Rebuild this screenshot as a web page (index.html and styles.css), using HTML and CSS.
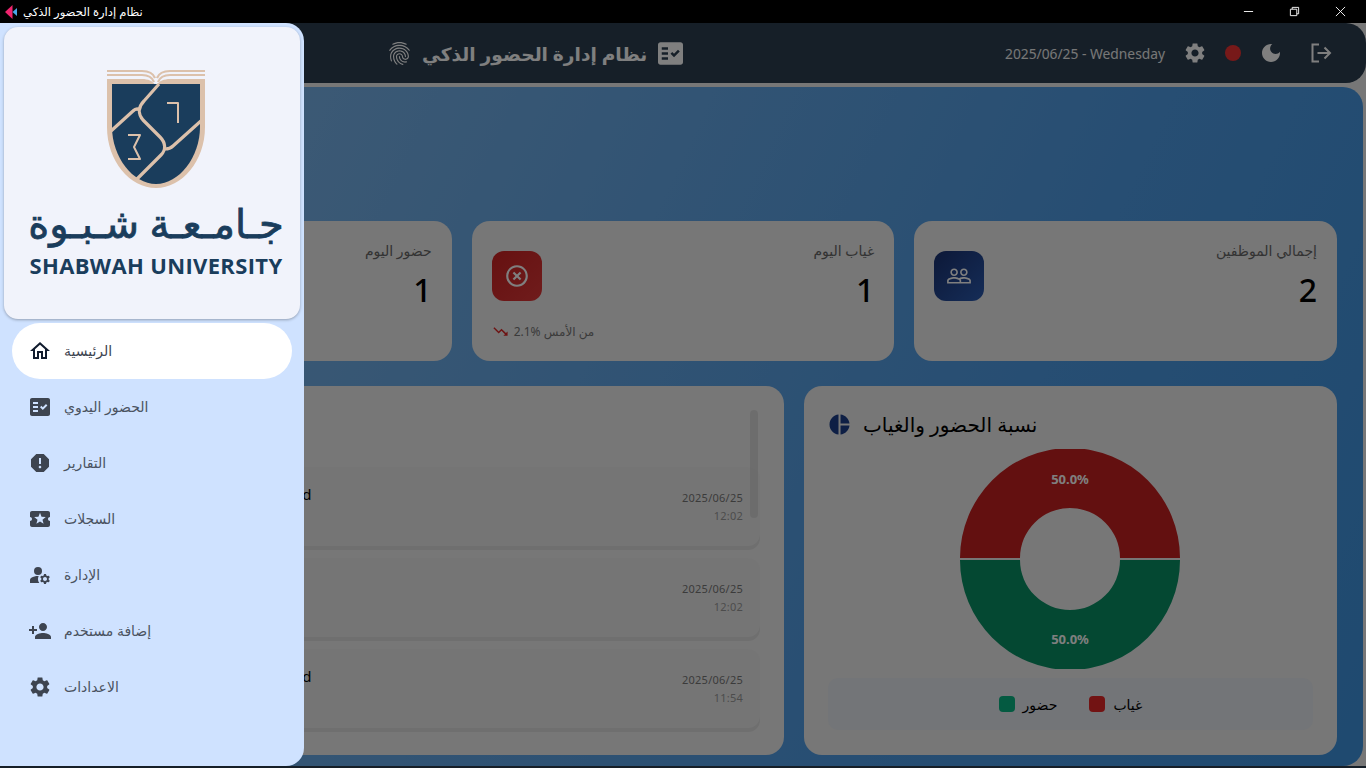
FILE: index.html
```html
<!DOCTYPE html>
<html lang="ar">
<head>
  <meta charset="UTF-8">
  <meta name="viewport" content="width=device-width, initial-scale=1.0">
  <title>نظام إدارة الحضور الذكي</title>
  <link rel="stylesheet" href="styles.css">
</head>
<body>

  <div class="titlebar">
    <div class="titlebar-name">
      <svg class="app-icon" viewBox="0 0 12 14"><path fill="#f0246e" d="M7.500 0v14L0 7z"/><path fill="#4aa8e8" d="M12 3v8L7.500 7z"/></svg>
      <span dir="rtl">نظام إدارة الحضور الذكي</span>
    </div>
    <div class="window-btns">
      <span class="window-btn"><svg viewBox="0 0 12 12"><path d="M1 6h10" stroke="#fff" fill="none"/></svg></span>
      <span class="window-btn"><svg viewBox="0 0 12 12"><path d="M1.500 3.500h7v7h-7zM3.500 3.500v-2h7v7h-2" stroke="#fff" fill="none"/></svg></span>
      <span class="window-btn"><svg viewBox="0 0 12 12"><path d="M1 1l10 10M11 1L1 11" stroke="#fff" fill="none"/></svg></span>
    </div>
  </div>

  <div class="app">
    <header class="topbar">
      <div class="brand">
        <svg class="brand-print" viewBox="2 1.500 20 21"><path d="M17.81 4.47c-.08 0-.16-.02-.23-.06C15.66 3.42 14 3 12.01 3c-1.98 0-3.86.47-5.57 1.41-.24.13-.54.04-.68-.2-.13-.24-.04-.55.2-.68C7.82 2.52 9.86 2 12.01 2c2.13 0 3.99.47 6.03 1.52.25.13.34.43.21.67-.09.18-.26.28-.44.28zM3.5 9.72c-.1 0-.2-.03-.29-.09-.23-.16-.28-.47-.12-.7.99-1.4 2.25-2.5 3.75-3.27C9.98 4.04 14 4.03 17.15 5.65c1.5.77 2.76 1.86 3.75 3.25.16.22.11.54-.12.7-.23.16-.54.11-.7-.12-.9-1.26-2.04-2.25-3.39-2.94-2.87-1.47-6.54-1.47-9.4.01-1.36.7-2.5 1.7-3.4 2.96-.08.14-.23.21-.39.21zm6.25 12.07c-.13 0-.26-.05-.35-.15-.87-.87-1.34-1.43-2.01-2.64-.69-1.23-1.05-2.73-1.05-4.34 0-2.97 2.54-5.39 5.66-5.39s5.66 2.42 5.66 5.39c0 .28-.22.5-.5.5s-.5-.22-.5-.5c0-2.42-2.09-4.39-4.66-4.39s-4.66 1.97-4.66 4.39c0 1.44.32 2.77.93 3.85.64 1.15 1.08 1.64 1.85 2.42.19.2.19.51 0 .71-.11.1-.24.15-.37.15zm7.17-1.85c-1.19 0-2.24-.3-3.1-.89-1.49-1.01-2.38-2.65-2.38-4.39 0-.28.22-.5.5-.5s.5.22.5.5c0 1.41.72 2.74 1.94 3.56.71.48 1.54.71 2.54.71.24 0 .64-.03 1.04-.1.27-.05.53.13.58.41.05.27-.13.53-.41.58-.57.11-1.07.12-1.21.12zM14.91 22c-.04 0-.09-.01-.13-.02-1.59-.44-2.63-1.03-3.72-2.1-1.4-1.39-2.17-3.24-2.17-5.22 0-1.62 1.38-2.94 3.08-2.94s3.08 1.32 3.08 2.94c0 1.07.93 1.94 2.08 1.94s2.08-.87 2.08-1.94c0-3.77-3.25-6.83-7.25-6.83-2.84 0-5.44 1.58-6.61 4.03-.39.81-.59 1.76-.59 2.8 0 .78.07 2.01.67 3.61.1.26-.03.55-.29.64-.26.1-.55-.04-.64-.29-.49-1.31-.73-2.61-.73-3.96 0-1.2.23-2.29.68-3.24 1.33-2.79 4.28-4.6 7.51-4.6 4.55 0 8.25 3.51 8.25 7.83 0 1.62-1.38 2.94-3.08 2.94s-3.08-1.32-3.08-2.94c0-1.07-.93-1.94-2.08-1.94s-2.08.87-2.08 1.94c0 1.71.66 3.31 1.87 4.51.95.94 1.86 1.46 3.27 1.85.27.07.42.35.35.61-.05.23-.26.38-.47.38z"/></svg>
        <h1 class="brand-title" dir="rtl">نظام إدارة الحضور الذكي</h1>
        <svg class="brand-check" viewBox="2 3 20 18"><path d="M20,3H4C2.9,3,2,3.9,2,5v14c0,1.1,0.9,2,2,2h16c1.1,0,2-0.9,2-2V5C22,3.9,21.1,3,20,3z M10,17H5v-2h5V17z M10,13H5v-2h5V13z M10,9H5V7h5V9z M14.82,15L12,12.16l1.41-1.41l1.41,1.42L17.99,9l1.42,1.42L14.82,15z"/></svg>
      </div>
      <div class="topbar-tools">
        <span class="topbar-date">2025/06/25 - Wednesday</span>
        <svg class="tool-icon" viewBox="0 0 24 24"><path d="M19.14,12.94c0.04-0.3,0.06-0.61,0.06-0.94c0-0.32-0.02-0.64-0.07-0.94l2.03-1.58c0.18-0.14,0.23-0.41,0.12-0.61l-1.92-3.32c-0.12-0.22-0.37-0.29-0.59-0.22l-2.39,0.96c-0.5-0.38-1.03-0.7-1.62-0.94L14.4,2.81c-0.04-0.24-0.24-0.41-0.48-0.41h-3.84c-0.24,0-0.43,0.17-0.47,0.41L9.25,5.35C8.66,5.59,8.12,5.92,7.63,6.29L5.24,5.33c-0.22-0.08-0.47,0-0.59,0.22L2.74,8.87C2.62,9.08,2.66,9.34,2.86,9.48l2.03,1.58C4.84,11.36,4.8,11.69,4.8,12s0.02,0.64,0.07,0.94l-2.03,1.58c-0.18,0.14-0.23,0.41-0.12,0.61l1.92,3.32c0.12,0.22,0.37,0.29,0.59,0.22l2.39-0.96c0.5,0.38,1.03,0.7,1.62,0.94l0.36,2.54c0.05,0.24,0.24,0.41,0.48,0.41h3.84c0.24,0,0.44-0.17,0.47-0.41l0.36-2.54c0.59-0.24,1.13-0.56,1.62-0.94l2.39,0.96c0.22,0.08,0.47,0,0.59-0.22l1.92-3.32c0.12-0.22,0.07-0.47-0.12-0.61L19.14,12.94z M12,15.6c-1.98,0-3.6-1.62-3.6-3.6s1.62-3.6,3.6-3.6s3.6,1.62,3.6,3.6S13.98,15.6,12,15.6z"/></svg>
        <span class="status-dot"></span>
        <svg class="tool-icon" viewBox="0 0 24 24"><path d="M12 3c-4.97 0-9 4.03-9 9s4.03 9 9 9 9-4.03 9-9c0-.46-.04-.92-.1-1.36-.98 1.37-2.58 2.26-4.4 2.26-2.98 0-5.4-2.42-5.4-5.4 0-1.81.89-3.42 2.26-4.4-.44-.06-.9-.1-1.36-.1z"/></svg>
        <svg class="tool-icon logout-icon" viewBox="0 0 24 24"><path d="M10 3.500H3.500v17H10M8.500 12H21M15.500 6.500L21 12l-5.500 5.500" fill="none" stroke="#fff" stroke-width="2"/></svg>
      </div>
    </header>

    <main class="main">
      <section class="stats">
        <div class="stat-card">
          <div class="stat-top">
            <span class="stat-icon icon-green"></span>
            <div class="stat-text">
              <div class="stat-label" dir="rtl">حضور اليوم</div>
              <div class="stat-value">1</div>
            </div>
          </div>
        </div>
        <div class="stat-card">
          <div class="stat-top">
            <span class="stat-icon icon-red">
              <svg viewBox="0 0 24 24"><path d="M14.59 8L12 10.59 9.41 8 8 9.41 10.59 12 8 14.59 9.41 16 12 13.41 14.59 16 16 14.59 13.41 12 16 9.41 14.59 8zM12 2C6.47 2 2 6.47 2 12s4.47 10 10 10 10-4.47 10-10S17.53 2 12 2zm0 18c-4.41 0-8-3.59-8-8s3.59-8 8-8 8 3.59 8 8-3.59 8-8 8z"/></svg>
            </span>
            <div class="stat-text">
              <div class="stat-label" dir="rtl">غياب اليوم</div>
              <div class="stat-value">1</div>
            </div>
          </div>
          <div class="stat-trend">
            <svg viewBox="0 0 24 24"><path d="M16 18l2.290-2.290-4.880-4.880-4 4L2 7.410 3.410 6l6 6 4-4 6.300 6.290L22 12v6z"/></svg>
            <span>2.1% من الأمس</span>
          </div>
        </div>
        <div class="stat-card">
          <div class="stat-top">
            <span class="stat-icon icon-blue">
              <svg viewBox="0 0 24 24"><path d="M16.5 13c-1.2 0-3.07.34-4.5 1-1.43-.67-3.3-1-4.5-1C5.33 13 1 14.08 1 16.25V19h22v-2.75c0-2.17-4.33-3.25-6.5-3.25zm-4 4.5h-10v-1.25c0-.54 2.56-1.75 5-1.75s5 1.21 5 1.75v1.25zm9 0H14v-1.25c0-.46-.2-.86-.52-1.22.88-.3 1.96-.53 3.02-.53 2.44 0 5 1.21 5 1.75v1.25zM7.5 12c1.93 0 3.5-1.57 3.5-3.5S9.43 5 7.5 5 4 6.57 4 8.5 5.57 12 7.5 12zm0-5.500c1.100 0 2 .9 2 2s-.9 2-2 2-2-.9-2-2 .9-2 2-2zm9 5.500c1.930 0 3.500-1.570 3.500-3.500S18.430 5 16.500 5 13 6.570 13 8.500s1.570 3.500 3.500 3.500zm0-5.500c1.100 0 2 .9 2 2s-.9 2-2 2-2-.9-2-2 .9-2 2-2z"/></svg>
            </span>
            <div class="stat-text">
              <div class="stat-label" dir="rtl">إجمالي الموظفين</div>
              <div class="stat-value">2</div>
            </div>
          </div>
        </div>
      </section>

      <section class="panels">
        <div class="panel records">
          <div class="record">
            <div class="record-name">Mohammed Ahmed</div>
            <div class="record-when"><div class="record-date">2025/06/25</div><div class="record-time">12:02</div></div>
          </div>
          <div class="record">
            <div class="record-name">Ali</div>
            <div class="record-when"><div class="record-date">2025/06/25</div><div class="record-time">12:02</div></div>
          </div>
          <div class="record">
            <div class="record-name">Mohammed Ahmed</div>
            <div class="record-when"><div class="record-date">2025/06/25</div><div class="record-time">11:54</div></div>
          </div>
          <span class="scroll-thumb"></span>
        </div>

        <div class="panel chart">
          <div class="chart-title">
            <svg viewBox="1.500 1.500 21 21"><path d="M11 2v20c-5.070-.5-9-4.790-9-10s3.930-9.500 9-10zm2.030 0v8.990H22c-.47-4.740-4.240-8.520-8.970-8.990zm0 11.010V22c4.740-.47 8.500-4.250 8.970-8.990h-8.970z"/></svg>
            <h2 dir="rtl">نسبة الحضور والغياب</h2>
          </div>
          <svg class="donut" viewBox="0 0 220 220">
            <path fill="#c62020" d="M0 109A110 110 0 0 1 220 109H160A50 50 0 0 0 60 109z"/>
            <path fill="#089064" d="M0 111A110 110 0 0 0 220 111H160A50 50 0 0 1 60 111z"/>
            <text x="110" y="35" class="donut-label">50.0%</text>
            <text x="110" y="195" class="donut-label">50.0%</text>
          </svg>
          <div class="legend">
            <span class="legend-item"><i class="swatch swatch-green"></i><span dir="rtl">حضور</span></span>
            <span class="legend-item"><i class="swatch swatch-red"></i><span dir="rtl">غياب</span></span>
          </div>
        </div>
      </section>
    </main>
    <div class="bottom-strip"></div>

    <!-- dimmed page behind the open drawer -->
    <div class="backdrop"></div>

    <aside class="drawer">
      <div class="logo-card">
        <svg class="crest" viewBox="0 0 100 120">
          <g fill="none" stroke="#dcc1ab" stroke-width="2.200">
            <path d="M1 2H36C42 2 47 4 49 9M99 2H64C58 2 53 4 51 9"/>
            <path d="M1 6H36C42 6 46 8 48 13M99 6H64C58 6 54 8 52 13"/>
          </g>
          <path fill="#dcc1ab" d="M1 10H36C42 10 47 12 49 16H51C53 12 58 10 64 10H99V58C99 92 76 119 50 119C24 119 1 92 1 58Z"/>
          <path fill="#1a3d5c" d="M6 15H94V58C94 88 73 115 50 115C27 115 6 88 6 58Z"/>
          <g fill="none" stroke="#dcc1ab" stroke-width="3.200" stroke-linejoin="round">
            <path d="M53 15L38 32C32 38 32 45 37 51L54 68C60 74 60 81 55 86L31 110"/>
            <path d="M5 62L27 42C29 40 31 39 34 41"/>
            <path d="M59 80C62 80 65 79 67 77L96 51"/>
            <path d="M61 34H72V54" stroke-width="2"/>
            <path d="M22 66H34L28 78L34 90H22" stroke-width="2"/>
          </g>
        </svg>
        <div class="logo-ar" dir="rtl">جـامـعـة شـبـوة</div>
        <div class="logo-en">SHABWAH UNIVERSITY</div>
      </div>
      <nav class="nav">
        <a class="nav-item active"><svg viewBox="0 0 24 24"><path d="M12 3L2 12h3v8h6v-6h2v6h6v-8h3L12 3zm5 15h-2v-6H9v6H7v-7.810l5-4.500 5 4.500V18z"/></svg><span dir="rtl">الرئيسية</span></a>
        <a class="nav-item"><svg viewBox="0 0 24 24"><path d="M20,3H4C2.900,3,2,3.900,2,5v14c0,1.100,0.900,2,2,2h16c1.100,0,2-0.900,2-2V5C22,3.900,21.100,3,20,3z M10,17H5v-2h5V17z M10,13H5v-2h5V13z M10,9H5V7h5V9z M14.820,15L12,12.160l1.410-1.410l1.410,1.420L17.990,9l1.420,1.420L14.820,15z"/></svg><span dir="rtl">الحضور اليدوي</span></a>
        <a class="nav-item"><svg viewBox="0 0 24 24"><path d="M15.730 3H8.270L3 8.270v7.460L8.270 21h7.460L21 15.730V8.270L15.730 3zM12 17.300c-.72 0-1.300-.58-1.300-1.300 0-.72.58-1.300 1.300-1.300.72 0 1.300.58 1.300 1.300 0 .72-.58 1.300-1.300 1.300zm1-4.300h-2V7h2v6z"/></svg><span dir="rtl">التقارير</span></a>
        <a class="nav-item"><svg viewBox="0 0 24 24"><path d="M20 12c0-1.100.9-2 2-2V6c0-1.100-.9-2-2-2H4c-1.100 0-1.990.9-1.990 2v4c1.100 0 1.990.9 1.990 2s-.89 2-2 2v4c0 1.100.9 2 2 2h16c1.100 0 2-.9 2-2v-4c-1.100 0-2-.9-2-2zm-4.420 4.800L12 14.500l-3.580 2.300 1.080-4.120-3.290-2.690 4.240-.25L12 5.800l1.540 3.950 4.240.25-3.290 2.690 1.090 4.110z"/></svg><span dir="rtl">السجلات</span></a>
        <a class="nav-item"><svg viewBox="0 0 24 24"><circle cx="10" cy="8" r="4"/><path d="M10.670,13.020C10.450,13.010,10.230,13,10,13c-2.420,0-4.680,0.670-6.610,1.820C2.510,15.340,2,16.320,2,17.350V20h9.260C10.470,18.870,10,17.490,10,16C10,14.930,10.250,13.930,10.670,13.020z"/><path d="M20.750,16c0-0.220-0.030-0.420-0.060-0.630l1.140-1.010l-1-1.730l-1.450,0.490c-0.320-0.270-0.680-0.480-1.080-0.630L18,11h-2l-0.300,1.490c-0.400,0.150-0.760,0.360-1.080,0.630l-1.450-0.490l-1,1.730l1.140,1.010c-0.030,0.210-0.060,0.410-0.060,0.630s0.030,0.420,0.060,0.630l-1.140,1.010l1,1.730l1.450-0.490c0.320,0.270,0.680,0.480,1.080,0.630L16,21h2l0.300-1.490c0.400-0.150,0.760-0.360,1.080-0.630l1.450,0.490l1-1.730l-1.140-1.010C20.720,16.420,20.750,16.220,20.750,16z M17,18c-1.100,0-2-0.900-2-2s0.900-2,2-2s2,0.900,2,2S18.100,18,17,18z"/></svg><span dir="rtl">الإدارة</span></a>
        <a class="nav-item"><svg viewBox="0 0 24 24"><path d="M15 12c2.210 0 4-1.790 4-4s-1.790-4-4-4-4 1.790-4 4 1.790 4 4 4zm-9-2V7H4v3H1v2h3v3h2v-3h3v-2H6zm9 4c-2.670 0-8 1.340-8 4v2h16v-2c0-2.660-5.330-4-8-4z"/></svg><span dir="rtl">إضافة مستخدم</span></a>
        <a class="nav-item"><svg viewBox="0 0 24 24"><path d="M19.140,12.940c0.040-0.300,0.060-0.610,0.060-0.940c0-0.320-0.020-0.640-0.070-0.940l2.030-1.580c0.180-0.140,0.230-0.410,0.120-0.610l-1.920-3.320c-0.120-0.220-0.370-0.290-0.590-0.220l-2.390,0.960c-0.500-0.380-1.030-0.700-1.620-0.940L14.400,2.810c-0.040-0.240-0.240-0.410-0.480-0.410h-3.840c-0.240,0-0.430,0.170-0.470,0.410L9.250,5.350C8.660,5.590,8.120,5.920,7.630,6.290L5.240,5.330c-0.220-0.080-0.470,0-0.590,0.220L2.740,8.870C2.620,9.080,2.660,9.340,2.860,9.480l2.030,1.580C4.840,11.360,4.800,11.690,4.800,12s0.020,0.640,0.070,0.940l-2.030,1.580c-0.180,0.140-0.230,0.410-0.120,0.610l1.920,3.320c0.120,0.220,0.370,0.290,0.590,0.220l2.390-0.960c0.500,0.380,1.030,0.700,1.620,0.940l0.360,2.540c0.050,0.240,0.240,0.410,0.480,0.410h3.840c0.240,0,0.440-0.170,0.470-0.410l0.360-2.540c0.590-0.240,1.130-0.560,1.620-0.940l2.390,0.960c0.220,0.080,0.470,0,0.590-0.220l1.920-3.320c0.120-0.220,0.070-0.470-0.120-0.610L19.140,12.940z M12,15.600c-1.980,0-3.600-1.620-3.600-3.600s1.620-3.600,3.600-3.600s3.600,1.620,3.600,3.600S13.980,15.600,12,15.600z"/></svg><span dir="rtl">الاعدادات</span></a>
      </nav>
    </aside>
  </div>

</body>
</html>
```
FILE: styles.css
```css
* {
  box-sizing: border-box;
}
html, body {
  height: 100%;
}
body {
  margin: 0;
  overflow: hidden;
  display: flex;
  flex-direction: column;
  font-family: 'Noto Sans', 'DejaVu Sans', sans-serif;
  background: #000;
}

/* window title bar */
.titlebar {
  height: 23px;
  flex: none;
  background: #000;
  color: #fff;
  display: flex;
  justify-content: space-between;
  align-items: center;
}
.titlebar-name {
  display: flex;
  align-items: center;
  gap: 6px;
  padding-left: 5px;
  font-size: 11.6px;
}
.app-icon {
  width: 12px;
  height: 14px;
}
.window-btns {
  display: flex;
  padding-right: 3px;
}
.window-btn {
  width: 46px;
  height: 23px;
  display: flex;
  align-items: center;
  justify-content: center;
}
.window-btn svg {
  width: 11px;
  height: 11px;
}

/* app */
.app {
  position: relative;
  flex: 1;
  display: flex;
  flex-direction: column;
  background: #eee;
  min-height: 0;
}
.topbar {
  height: 60px;
  flex: none;
  background: #2c3e50;
  border-radius: 0 20px 20px 0;
  display: flex;
  justify-content: space-between;
  align-items: center;
  padding: 0 33px 0 388px;
  color: #fff;
}
.brand {
  display: flex;
  align-items: center;
  gap: 11px;
}
.brand-print {
  width: 23px;
  height: 25px;
  fill: #fff;
}
.brand-title {
  margin: 0;
  font-size: 18.600px;
  font-weight: 700;
}
.brand-check {
  width: 25px;
  height: 23px;
  fill: #fff;
}
.topbar-tools {
  display: flex;
  align-items: center;
}
.topbar-date {
  font-size: 13.800px;
  color: #eee;
  margin-right: 18px;
}
.tool-icon {
  width: 24px;
  height: 24px;
  fill: #fff;
}
.status-dot {
  width: 16px;
  height: 16px;
  border-radius: 50%;
  background: #ee3333;
  margin: 0 18px;
}
.logout-icon {
  margin-left: 26px;
}

.main {
  flex: 1;
  min-height: 0;
  margin: 4px 3px 0 0;
  padding: 134px 26px 11px 29px;
  border-radius: 0 20px 20px 0;
  background: linear-gradient(115deg, #7ab4ea 15%, #4e9ce6 70%, #3e94e0);
  display: flex;
  flex-direction: column;
  gap: 25px;
}
.bottom-strip {
  height: 2px;
  flex: none;
  background: #2c3e50;
}
.stats {
  display: grid;
  grid-template-columns: repeat(3, 1fr);
  gap: 20px;
}
.stat-card {
  height: 140px;
  background: #eee;
  border-radius: 18px;
  padding: 20px;
  display: flex;
  flex-direction: column;
  justify-content: space-between;
}
.stat-top {
  display: flex;
  justify-content: space-between;
}
.stat-icon {
  width: 50px;
  height: 50px;
  margin-top: 10px;
  border-radius: 12px;
  display: flex;
  align-items: center;
  justify-content: center;
}
.stat-icon svg {
  width: 26px;
  height: 26px;
  fill: #fff;
}
.icon-green {
  background: #0d9668;
}
.icon-red {
  background: linear-gradient(135deg, #cc2222, #e03838);
}
.icon-blue {
  background: linear-gradient(135deg, #1a3170, #2a5ab0);
}
.stat-text {
  text-align: right;
}
.stat-label {
  font-size: 14px;
  color: #666;
  line-height: 20px;
}
.stat-value {
  font-size: 32px;
  font-weight: 500;
  line-height: 40px;
  margin-top: 9px;
  color: #000;
}
.stat-trend {
  display: flex;
  align-items: center;
  gap: 5px;
  font-size: 12px;
  color: #777;
  padding-bottom: 1px;
}
.stat-trend svg {
  width: 17px;
  height: 17px;
  fill: #dc2626;
}

.panels {
  flex: 1;
  min-height: 0;
  display: grid;
  grid-template-columns: 1fr 533px;
  gap: 20px;
}
.panel {
  position: relative;
  background: #eee;
  border-radius: 18px;
}
.records {
  padding: 81px 24px 0;
  display: flex;
  flex-direction: column;
  gap: 12px;
}
.record {
  height: 79px;
  flex: none;
  background: #ebebeb;
  border-radius: 12px;
  box-shadow: 0 4px 0 #dedede;
  padding: 0 17px 0 0;
  display: flex;
  justify-content: space-between;
  align-items: center;
}
.record-name {
  font-size: 15px;
  color: #000;
  padding-left: 118px;
  margin-top: -26px;
}
.record-when {
  text-align: right;
  margin-top: 1px;
}
.record-date {
  font-size: 11px;
  line-height: 18px;
  letter-spacing: .25px;
  color: #777;
}
.record-time {
  font-size: 11px;
  line-height: 18px;
  letter-spacing: .25px;
  color: #999;
}
.scroll-thumb {
  position: absolute;
  top: 24px;
  right: 26px;
  width: 8px;
  height: 108px;
  border-radius: 4px;
  background: rgba(0, 0, 0, .08);
}
.chart {
  padding: 23px 25px 24px 24px;
  display: flex;
  flex-direction: column;
}
.chart-title {
  display: flex;
  align-items: center;
  gap: 13px;
  height: 30px;
  margin-left: 1px;
}
.chart-title svg {
  width: 21px;
  height: 21px;
  fill: #1c3f8a;
}
.chart-title h2 {
  margin: 0;
  font-size: 20px;
  font-weight: 400;
  color: #000;
}
.donut {
  width: 220px;
  height: 220px;
  margin: 10px auto 0;
}
.donut-label {
  font-size: 13px;
  font-weight: 700;
  fill: #fff;
  text-anchor: middle;
}
.legend {
  margin: 9px -1px 0 0;
  height: 52px;
  background: #e6eaf0;
  border-radius: 10px;
  display: flex;
  justify-content: center;
  align-items: center;
  gap: 32px;
  font-size: 14px;
  color: #000;
}
.legend-item {
  display: flex;
  align-items: center;
  gap: 8px;
}
.swatch {
  width: 16px;
  height: 16px;
  border-radius: 4px;
}
.swatch-green {
  background: #08b482;
}
.swatch-red {
  background: #e42626;
}

.backdrop {
  position: absolute;
  inset: 0;
  background: rgba(0, 0, 0, .5);
}
.drawer {
  position: absolute;
  left: 0;
  top: 0;
  bottom: 2px;
  width: 304px;
  background: #cfe2ff;
  border-radius: 0 18px 18px 0;
  padding: 4px 4px 0;
  display: flex;
  flex-direction: column;
}
.logo-card {
  height: 292px;
  flex: none;
  background: #f1f3fb;
  border-radius: 14px;
  box-shadow: 0 1px 3px rgba(0, 0, 0, .3);
  display: flex;
  flex-direction: column;
  align-items: center;
  padding: 42px 0 0 8px;
}
.crest {
  width: 100px;
  height: 120px;
}
.logo-ar {
  font-size: 40px;
  line-height: 46px;
  margin-top: 11px;
  color: #1a3d5c;
  -webkit-text-stroke: .8px #1a3d5c;
}
.logo-en {
  font-family: 'Open Sans', sans-serif;
  font-size: 22px;
  line-height: 26px;
  font-weight: 700;
  letter-spacing: .35px;
  margin-top: 6px;
  color: #1a3d5c;
}
.nav {
  padding: 4px 8px 0;
  display: flex;
  flex-direction: column;
}
.nav-item {
  height: 56px;
  flex: none;
  border-radius: 28px;
  padding-left: 16px;
  display: flex;
  align-items: center;
  gap: 12px;
  font-size: 14px;
  color: #4a5260;
}
.nav-item span {
  padding-bottom: 2px;
}
.nav-item svg {
  width: 24px;
  height: 24px;
  fill: #3d4450;
}
.nav-item.active {
  background: #fff;
  color: #3d4450;
}
.nav-item.active svg {
  fill: #111c2e;
}
```
